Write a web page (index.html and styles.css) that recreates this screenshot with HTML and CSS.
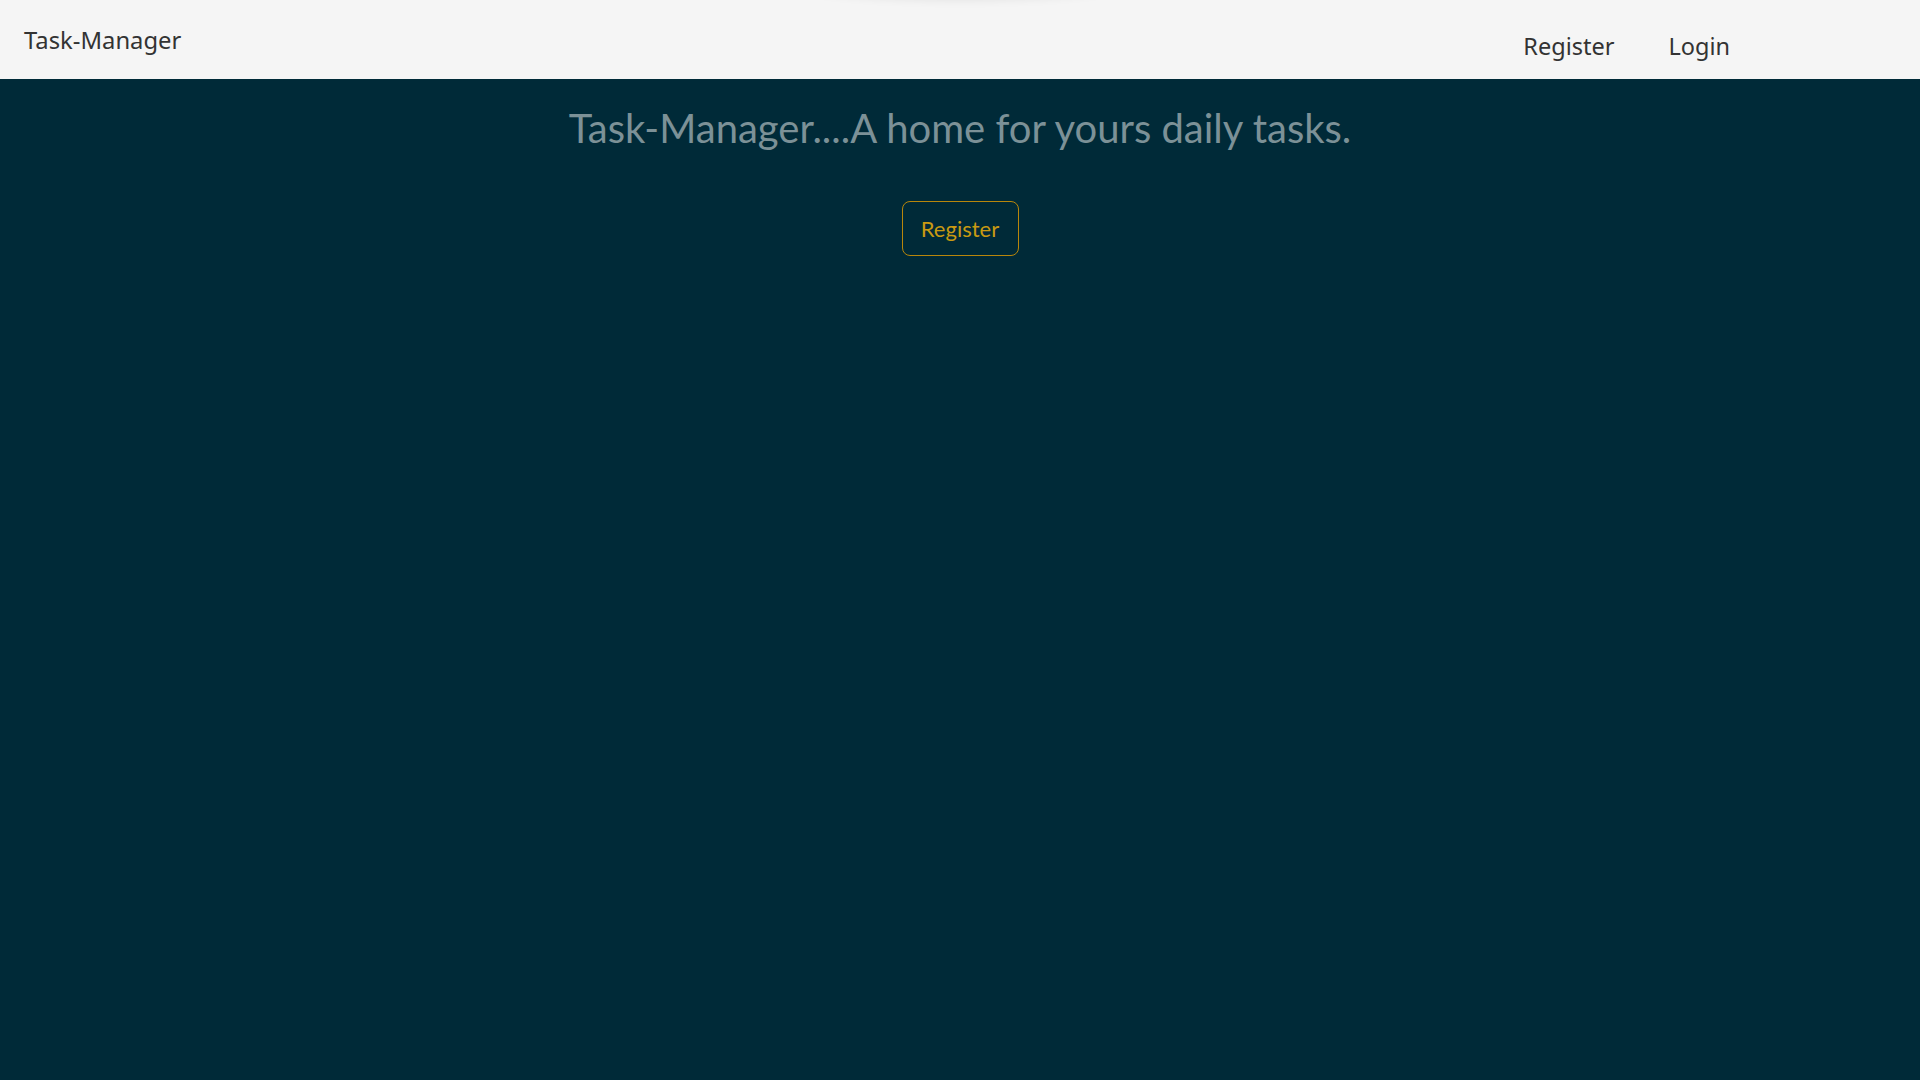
FILE: index.html
```html
<!DOCTYPE html>
<html lang="en">
<head>
<meta charset="utf-8">
<title>Task-Manager</title>
<link rel="stylesheet" href="styles.css">
</head>
<body>
<div class="top-shadow"></div>
<nav class="navbar">
  <a class="brand" href="#">Task-Manager</a>
  <ul class="nav-links">
    <li><a href="#">Register</a></li>
    <li><a href="#">Login</a></li>
  </ul>
</nav>
<main class="hero">
  <h1 class="title">Task-Manager....A home for yours daily tasks.</h1>
  <a class="btn-outline" href="#">Register</a>
</main>
</body>
</html>
```
FILE: styles.css
```css
* { box-sizing: border-box; }
html, body { height: 100%; }
body {
  margin: 0;
  background: #002a38;
  font-family: "Open Sans", "Noto Sans", sans-serif;
  overflow: hidden;
}
a { text-decoration: none; }
.top-shadow {
  position: absolute;
  top: -30px;
  left: 800px;
  width: 320px;
  height: 30px;
  border-radius: 50%;
  box-shadow: 0 0 10px rgba(0,0,0,0.08);
  z-index: 5;
}
.navbar {
  height: 79px;
  background: #f5f5f5;
  display: flex;
  align-items: flex-start;
  justify-content: space-between;
  padding: 0 190px 0 24px;
}
.brand {
  color: #333;
  font-size: 23.8px;
  line-height: 1;
  margin-top: 29px;
  font-family: "Noto Sans", "Open Sans", sans-serif;
}
.nav-links {
  list-style: none;
  margin: 0;
  padding: 0;
  display: flex;
  gap: 54px;
}
.nav-links a {
  display: block;
  color: #333;
  font-size: 23.5px;
  line-height: 1;
  margin-top: 35px;
  font-family: "Noto Sans", "Open Sans", sans-serif;
}
.hero {
  display: flex;
  flex-direction: column;
  align-items: center;
}
.title {
  margin: 25px 0 0;
  font-family: Lato, sans-serif;
  font-weight: 400;
  font-size: 40px;
  line-height: 48px;
  color: #7c9197;
}
.btn-outline {
  margin-top: 49px;
  width: 117px;
  height: 55px;
  display: flex;
  align-items: center;
  justify-content: center;
  border: 1px solid #b8860b;
  border-radius: 8px;
  color: #c99a12;
  font-family: Lato, sans-serif;
  font-size: 22px;
}
```
